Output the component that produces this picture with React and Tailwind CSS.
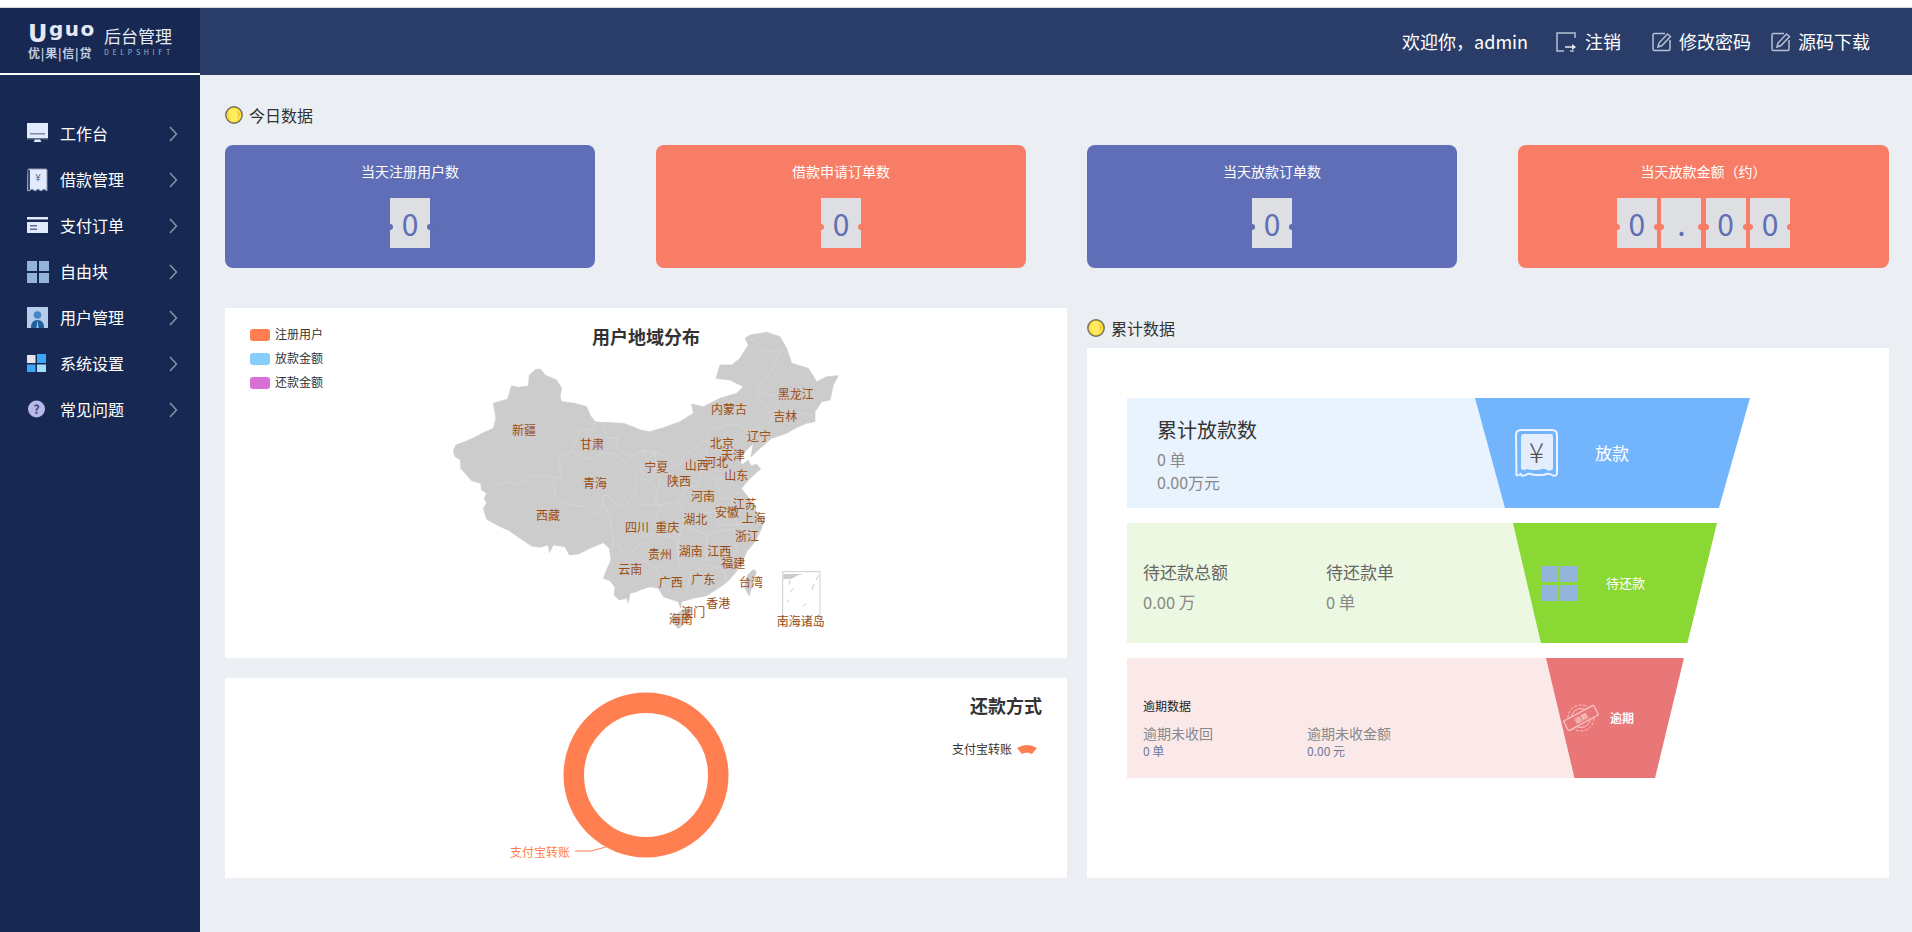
import React from 'react';

const FONT = "font-['Noto_Sans_CJK_SC','Noto_Sans',sans-serif]";

function Chevron() {
  return (
    <svg width="10" height="18" viewBox="0 0 10 18" className="ml-auto mr-[22px]" fill="none">
      <polyline points="2,2 8.5,9 2,16" stroke="#8b93a9" strokeWidth="1.5" />
    </svg>
  );
}

const NavIcons = {
  desk: (
    <svg width="22" height="22" viewBox="0 0 22 22">
      <rect x="0" y="0" width="21" height="15" fill="#e1ebfd" />
      <rect x="3" y="10" width="15" height="1.5" fill="#7d8aa6" />
      <rect x="0" y="15" width="21" height="1.5" fill="#5f6d8c" />
      <path d="M8 16.5h5l1.5 2.5h-8z" fill="#e1ebfd" />
    </svg>
  ),
  receipt: (
    <svg width="22" height="24" viewBox="0 0 22 24">
      <path d="M1 2q0-1 1-1h17q1 0 1 1v21l-3-2-3 2-3-2-3 2-3-2-3 2-2-1z" fill="#e1ebfd" stroke="#8f9ab3" />
      <path d="M2 2v20" stroke="#3c4a6c" strokeWidth="2" />
      <text x="11" y="13" fontSize="10" textAnchor="middle" fill="#5b6679">¥</text>
    </svg>
  ),
  card: (
    <svg width="22" height="18" viewBox="0 0 22 18">
      <rect x="0" y="0" width="21" height="2.5" fill="#e1ebfd" />
      <rect x="0" y="5" width="21" height="11" fill="#e1ebfd" />
      <rect x="3" y="8" width="7" height="1.5" fill="#5f6d8c" />
      <rect x="3" y="11.5" width="7" height="1.5" fill="#5f6d8c" />
    </svg>
  ),
  blocks: (
    <svg width="22" height="22" viewBox="0 0 22 22">
      <rect x="0" y="0" width="10" height="10" fill="#93b3d8" />
      <rect x="12" y="0" width="10" height="10" fill="#93b3d8" />
      <rect x="0" y="12" width="10" height="10" fill="#93b3d8" />
      <rect x="12" y="12" width="10" height="10" fill="#93b3d8" />
    </svg>
  ),
  user: (
    <svg width="22" height="22" viewBox="0 0 22 22">
      <rect width="21" height="21" fill="#b3cdea" />
      <circle cx="10.5" cy="8" r="3.8" fill="#4a86c5" />
      <path d="M4 21q0-8 6.5-8t6.5 8z" fill="#1f5f9c" />
      <path d="M10.5 13l-1 8h2z" fill="#b3cdea" />
    </svg>
  ),
  win: (
    <svg width="22" height="20" viewBox="0 0 22 20">
      <rect x="0" y="1" width="8.5" height="8" fill="#e6e6e6" />
      <rect x="10" y="0" width="9" height="9" fill="#3ea6f6" />
      <rect x="0" y="10.5" width="8.5" height="7.5" fill="#3ea6f6" />
      <rect x="10" y="10.5" width="9" height="7.5" fill="#a5e0fa" />
    </svg>
  ),
  help: (
    <svg width="22" height="20" viewBox="0 0 22 20">
      <circle cx="9.5" cy="9" r="8.5" fill="#b7b8e8" />
      <text x="9.5" y="13.5" fontSize="12" fontWeight="700" textAnchor="middle" fill="#3d4470">?</text>
    </svg>
  ),
};

const NAV = [
  ['工作台', 'desk'],
  ['借款管理', 'receipt'],
  ['支付订单', 'card'],
  ['自由块', 'blocks'],
  ['用户管理', 'user'],
  ['系统设置', 'win'],
  ['常见问题', 'help'],
];

function Sidebar() {
  return (
    <aside className="w-[200px] shrink-0 bg-[#172852] flex flex-col">
      <div className="h-[67px] border-b-2 border-white flex pl-[28px] pt-[14px] text-white">
        <div className="w-[76px] flex flex-col">
          <div className="mt-[3px] h-[21px] flex items-start text-[#e4e9f5] tracking-[1.5px] font-['DejaVu_Sans',sans-serif] font-bold">
            <span className="text-[24px] leading-[24px] -mt-[3px]">U</span>
            <span className="text-[20px] leading-[20px] -mt-[6px]">guo</span>
          </div>
          <div className="text-[12px] tracking-[0.8px] leading-[14px] font-bold whitespace-nowrap text-[#c5ccdd]">优|果|信|贷</div>
        </div>
        <div className="flex flex-col">
          <div className="text-[17px] leading-[22px] text-[#e4e9f5] whitespace-nowrap mt-[3px]">后台管理</div>
          <div className="text-[7px] leading-[8px] mt-[1px] tracking-[3.7px] text-[#aab3c9] whitespace-nowrap">DELPSHIFT</div>
        </div>
      </div>
      <nav className="mt-[36px] flex flex-col">
        {NAV.map(([label, icon]) => (
          <div key={label} className="h-[46px] flex items-center pl-[27px] text-white text-[16px]">
            <span className="w-[33px] flex items-center shrink-0">{NavIcons[icon]}</span>
            <span className="-mt-[2px]">{label}</span>
            <Chevron />
          </div>
        ))}
      </nav>
    </aside>
  );
}

function LogoutIcon() {
  return (
    <svg width="21" height="20" viewBox="0 0 21 20" fill="none" stroke="#b7bfd2" strokeWidth="1.5">
      <path d="M19 6V1H1v18h7" />
      <path d="M9 15h10" stroke="#e8ebf2" />
      <path d="M16 12l4 3-4 3z" fill="#e8ebf2" stroke="none" />
      <path d="M14 19h4" />
    </svg>
  );
}

function EditIcon() {
  return (
    <svg width="21" height="20" viewBox="0 0 21 20" fill="none" stroke="#b7bfd2" strokeWidth="1.5">
      <path d="M13 1.5H2.5q-1.5 0-1.5 1.5v14q0 1.5 1.5 1.5h14q1.5 0 1.5-1.5V8" />
      <path d="M6 15l1-4 8.5-9 3 2.5-8.5 9z" />
    </svg>
  );
}

function Header() {
  return (
    <header className="h-[67px] shrink-0 bg-[#2a3c68] flex items-center justify-end pr-[42px] text-white text-[18px]">
      <span className="whitespace-nowrap">欢迎你，admin</span>
      <span className="ml-[28px]"><LogoutIcon /></span>
      <span className="ml-[8px] whitespace-nowrap">注销</span>
      <span className="ml-[31px]"><EditIcon /></span>
      <span className="ml-[6px] whitespace-nowrap">修改密码</span>
      <span className="ml-[20px]"><EditIcon /></span>
      <span className="ml-[6px] whitespace-nowrap">源码下载</span>
    </header>
  );
}

function Coin() {
  return (
    <svg width="18" height="18" viewBox="0 0 18 18" className="shrink-0">
      <circle cx="9" cy="9" r="8.2" fill="#ffdc3a" stroke="#6f705f" strokeWidth="1.4" />
      <path d="M6 2.5q-4 6 1 13 7 0 8.5-6.5-1-5-5-6z" fill="#ffec62" />
      <path d="M11 4q3 3 1.5 9 3-3 2.5-6z" fill="#f5c431" />
    </svg>
  );
}

function SectionTitle({ children, className }) {
  return (
    <div className={`flex items-center gap-[6px] text-[16px] text-[#333] ${className}`}>
      <Coin />
      <span>{children}</span>
    </div>
  );
}

function Digit({ ch, notch }) {
  return (
    <div className="relative w-[40px] h-[50px] bg-[#dddfe3] flex items-center justify-center text-[#5f6eb6] text-[30px] leading-none">
      {ch}
      <span className={`absolute left-[-3px] top-[26px] w-[6px] h-[6px] rounded-full ${notch}`} />
      <span className={`absolute right-[-3px] top-[26px] w-[6px] h-[6px] rounded-full ${notch}`} />
    </div>
  );
}

function StatCard({ title, digits, red }) {
  const bg = red ? 'bg-[#f77d66]' : 'bg-[#5f6eb6]';
  return (
    <div className={`h-[123px] rounded-[8px] ${bg} flex flex-col items-center pt-[16px]`}>
      <div className="text-white text-[14px] leading-[20px]">{title}</div>
      <div className="mt-[17px] flex gap-[4.4px]">
        {digits.map((d, i) => <Digit key={i} ch={d} notch={bg} />)}
      </div>
    </div>
  );
}

/* Map traces: west half in one crop's coordinates, east half in another's. */
const W = ([x, y]) => `${x + 30},${y + 150}`;
const E = ([x, y]) => `${x + 600},${y + 45}`;

const WEST = [[455,187],[435,185],[420,165],[410,140],[375,130],[335,125],[330,110],[335,85],[320,60],[285,45],[272,28],[258,28],[238,45],[235,78],[205,82],[185,77],[172,118],[155,122],[130,130],[138,175],[130,205],[100,218],[68,235],[45,245],[18,255],[10,272],[15,290],[32,300],[32,325],[50,345],[65,362],[92,370],[95,390],[110,400],[103,415],[110,430],[100,445],[110,478],[150,500],[175,510],[200,528],[225,545],[245,558],[270,562],[295,555],[298,578],[310,555],[345,560],[358,585],[385,582],[420,565],[460,548],[478,565],[483,600],[470,630],[460,655],[480,662],[495,682],[492,705],[508,720],[530,715],[535,728],[540,700],[560,695]];
const EAST = [[0,795],[30,785],[55,790],[70,815],[100,825],[115,830],[122,850],[125,830],[160,820],[200,812],[235,790],[262,770],[285,745],[305,715],[320,680],[345,650],[365,610],[370,590],[350,560],[335,530],[315,505],[305,490],[325,465],[362,432],[350,418],[333,422],[325,405],[305,420],[300,400],[320,375],[340,355],[333,395],[360,370],[395,340],[440,325],[465,310],[500,295],[525,290],[525,260],[545,230],[570,225],[580,180],[595,152],[560,155],[530,170],[505,130],[455,115],[440,70],[420,35],[380,22],[330,30],[315,40],[325,60],[300,100],[275,120],[240,120],[228,160],[270,165],[310,185],[290,205],[240,220],[190,245],[155,237],[160,265],[120,290],[70,308],[30,320],[0,315]];
const NORTH = [[560,205],[520,190]];
const OUTLINE = [...WEST.map(W), ...EAST.map(E), ...NORTH.map(W)].join(' ');
const HAINAN = [[90,880],[135,850],[155,872],[130,900],[115,912],[95,892]].map(E).join(' ');
const TAIWAN = [[340,732],[350,740],[335,790],[328,815],[312,785],[322,750]].map(E).join(' ');

const WB = [
  [[125,380],[150,372],[180,365],[200,373],[245,350],[280,345],[310,355],[335,350],[325,295],[365,275],[390,215],[430,205],[435,187]],
  [[310,355],[315,410],[345,432],[405,440],[430,465],[455,445],[458,410],[470,405],[495,430],[525,440],[555,400],[560,340],[520,300],[490,280],[455,278],[430,298],[395,290],[365,275]],
  [[455,187],[470,235],[505,232],[500,260],[540,290],[580,270],[600,310]],
  [[458,430],[480,470],[490,555],[483,570]],
  [[490,530],[530,595],[575,545],[600,560]],
].map((l) => l.map(W).join(' '));

const EB = [
  [[315,40],[345,45],[365,75],[420,80],[400,130],[365,175],[350,210]],
  [[365,205],[420,215],[395,280],[440,255],[520,270]],
  [[350,210],[385,260],[400,285],[360,310],[320,320]],
  [[320,320],[300,300],[260,300],[205,320],[200,345],[135,390],[115,430],[60,385],[45,380]],
  [[205,345],[190,430],[175,480],[135,490]],
  [[190,430],[225,455],[255,465],[305,490]],
  [[135,490],[115,530],[135,570],[225,560],[245,520],[225,455]],
  [[245,520],[275,520],[305,490]],
  [[275,520],[290,600],[370,590]],
  [[225,560],[235,600],[290,600]],
  [[115,530],[60,540],[45,600],[60,620],[120,630],[135,570]],
  [[120,630],[115,660],[115,730]],
  [[200,630],[135,600]],
  [[200,630],[200,720],[150,745],[140,800]],
  [[200,630],[280,610],[290,680],[250,730],[200,720]],
  [[250,730],[262,770]],
  [[0,640],[45,625],[110,640],[115,700],[50,730],[0,700]],
  [[50,730],[70,780],[115,825]],
  [[115,730],[140,745]],
  [[45,380],[30,400],[60,460],[45,540]],
  [[0,380],[40,380],[50,420],[30,470],[10,460],[0,420]],
  [[0,540],[60,540]],
].map((l) => l.map(E).join(' '));

const LABELS = [
  ['新疆', 252, 358], ['甘肃', 456, 401], ['青海', 465, 517], ['西藏', 324, 614], ['内蒙古', 867, 296],
  ['黑龙江', 1067, 250], ['吉林', 1036, 315], ['辽宁', 957, 377], ['北京', 846, 398], ['天津', 879, 433],
  ['河北', 828, 455], ['山西', 770, 463], ['宁夏', 649, 469], ['陕西', 717, 511], ['山东', 889, 494],
  ['河南', 789, 557], ['江苏', 914, 580], ['安徽', 861, 605], ['上海', 941, 623], ['湖北', 766, 626],
  ['四川', 591, 650], ['重庆', 682, 650], ['浙江', 921, 677], ['贵州', 660, 730], ['湖南', 752, 722],
  ['江西', 838, 722], ['福建', 880, 758], ['云南', 571, 776], ['广西', 692, 814], ['广东', 790, 806],
  ['台湾', 933, 815], ['香港', 835, 878], ['澳门', 760, 904], ['海南', 722, 926], ['南海诸岛', 1082, 930],
];

function ChinaMap() {
  return (
    <svg width="420" height="330" viewBox="0 0 1260 990" className="absolute left-[215px] top-[2px]">
      <polygon points={OUTLINE} fill="#cccccc" stroke="#cccccc" strokeWidth="2" strokeLinejoin="round" />
      <polygon points={HAINAN} fill="#cccccc" />
      <polygon points={TAIWAN} fill="#cccccc" />
      {[...WB, ...EB].map((p, i) => (
        <polyline key={i} points={p} fill="none" stroke="#dadada" strokeWidth="2" />
      ))}
      <rect x="1028" y="785" width="112" height="163" fill="#fff" stroke="#cfcfcf" strokeWidth="3" />
      <path d="M1030 792h60q-20 4-35 14l-25 2z" fill="#cccccc" />
      <path d="M1050 810l-2 14M1135 795l-6 15M1122 822l-6 18M1060 835l-10 12M1100 880l-12 10M1048 870l-8 8" stroke="#cccccc" strokeWidth="3" fill="none" />
      {LABELS.map(([t, x, y]) => (
        <text key={t} x={x} y={y} fontSize="36" fill="#9c4c12" textAnchor="middle" dominantBaseline="central">{t}</text>
      ))}
    </svg>
  );
}

function MapPanel() {
  const legend = [['注册用户', 'bg-[#ff7f50]'], ['放款金额', 'bg-[#87cefa]'], ['还款金额', 'bg-[#da70d6]']];
  return (
    <div className="relative h-[350px] bg-white">
      <div className="absolute left-[25px] top-[18px] flex flex-col gap-[6px]">
        {legend.map(([t, c]) => (
          <div key={t} className="h-[18px] flex items-center gap-[5px] text-[12px] text-[#333]">
            <span className={`w-[20px] h-[12px] rounded-[3px] ${c}`} />
            <span className="-mt-[2px]">{t}</span>
          </div>
        ))}
      </div>
      <ChinaMap />
      <div className="relative text-center text-[18px] font-bold text-[#333] leading-[24px] pt-[16px]">用户地域分布</div>
    </div>
  );
}

function RingPanel() {
  return (
    <div className="relative h-[200px] bg-white">
      <svg width="300" height="180" viewBox="0 0 300 180" className="absolute left-[280px] top-[10px]">
        <circle cx="141" cy="87" r="72.25" fill="none" stroke="#ff7f50" strokeWidth="20.5" />
        <polyline points="70,163 86,163 101,159" fill="none" stroke="#ff7f50" strokeWidth="1" />
        <text x="5" y="163" fontSize="12" fill="#ff7f50" dominantBaseline="central">支付宝转账</text>
      </svg>
      <div className="flex flex-col items-end pr-[25px] pt-[15px]">
        <div className="text-[18px] font-bold text-[#333] leading-[25px]">还款方式</div>
        <div className="mt-[22px] mr-[5px] flex items-center gap-[5px] text-[12px] text-[#333] leading-[18px]">
          <span>支付宝转账</span>
          <svg width="20" height="10" viewBox="0 0 20 10">
            <path d="M0 4Q10-2 20 4L15 10Q10 7 5 10Z" fill="#ff7f50" />
          </svg>
        </div>
      </div>
    </div>
  );
}

function ReceiptBig() {
  return (
    <svg width="43" height="48" viewBox="0 0 43 48" className="shrink-0">
      <path d="M1 6q0-5 5-5h31q5 0 5 5v39q-2 3-5 1t-5.5-1-5 1-5.500 0-5-1-5.500 1-5-1q-3 2-4 1z" fill="#73b5fd" stroke="#eaf3ff" strokeWidth="2" />
      <path d="M6 8q0-3 3-3h27q2 0 2 3v32q-3 3-6 1t-5-1-5 1-5 0-5-1q-3 2-6 0z" fill="#e3edfd" />
      <text x="21.5" y="22" fontSize="28" fontWeight="300" textAnchor="middle" dominantBaseline="central" fill="#555">¥</text>
    </svg>
  );
}

function GridIcon() {
  return (
    <svg width="36" height="35" viewBox="0 0 36 35" className="shrink-0">
      <rect x="0" y="0" width="16.5" height="16" fill="#93b3d8" />
      <rect x="19" y="0" width="17" height="16" fill="#93b3d8" />
      <rect x="0" y="19" width="16.5" height="16" fill="#93b3d8" />
      <rect x="19" y="19" width="17" height="16" fill="#93b3d8" />
    </svg>
  );
}

function StampIcon() {
  return (
    <svg width="36" height="28" viewBox="0 0 36 28" className="shrink-0" fill="none" stroke="#f7c6c6" strokeWidth="1">
      <circle cx="18" cy="14" r="13" strokeDasharray="3 1.5" />
      <circle cx="18" cy="14" r="9.5" />
      <g transform="rotate(-28 18 14)">
        <rect x="1" y="8.5" width="34" height="11" rx="1" fill="#e97777" strokeWidth="1.2" />
        <text x="18" y="14" fontSize="7" textAnchor="middle" dominantBaseline="central" fill="#f7c6c6" stroke="none">逾期</text>
      </g>
    </svg>
  );
}

function Funnel() {
  return (
    <div className="flex flex-col gap-[15px] pt-[50px] pl-[40px]">
      <div className="flex h-[110px]">
        <div className="w-[378px] bg-[#e8f3fe] pl-[30px] pt-[18px]">
          <div className="text-[20px] leading-[28px] text-[#333]">累计放款数</div>
          <div className="mt-[4px] text-[16px] leading-[23px] text-[#888]">0 单</div>
          <div className="text-[16px] leading-[23px] text-[#888]">0.00万元</div>
        </div>
        <div className="relative w-[275px] -ml-[30px] bg-[#73b5fd] [clip-path:polygon(0_0,100%_0,88.7%_100%,10.9%_100%)] flex items-center pl-[40px] gap-[37px] text-white text-[17px]">
          <ReceiptBig />
          <span>放款</span>
        </div>
      </div>
      <div className="flex h-[120px]">
        <div className="w-[414px] bg-[#ecf8e1] pl-[16px] pt-[37px] flex">
          <div className="w-[183px]">
            <div className="text-[17px] leading-[24px] text-[#666]">待还款总额</div>
            <div className="mt-[6px] text-[16.5px] leading-[24px] text-[#888]">0.00 万</div>
          </div>
          <div>
            <div className="text-[17px] leading-[24px] text-[#666]">待还款单</div>
            <div className="mt-[6px] text-[16.5px] leading-[24px] text-[#888]">0 单</div>
          </div>
        </div>
        <div className="relative w-[204px] -ml-[28px] bg-[#8ad833] [clip-path:polygon(0_0,100%_0,85.5%_100%,13.7%_100%)] flex items-center pl-[28px] gap-[29px] text-white text-[13px]">
          <GridIcon />
          <span>待还款</span>
        </div>
      </div>
      <div className="flex h-[120px]">
        <div className="w-[447.5px] bg-[#fbe9e9] pl-[16px] pt-[40px]">
          <div className="text-[12px] leading-[16px] text-[#222]">逾期数据</div>
          <div className="mt-[9px] flex">
            <div className="w-[164px]">
              <div className="text-[14px] leading-[20px] text-[#888]">逾期未收回</div>
              <div className="text-[12px] leading-[16px] text-[#6b7a99]">0 单</div>
            </div>
            <div>
              <div className="text-[14px] leading-[20px] text-[#888]">逾期未收金额</div>
              <div className="text-[12px] leading-[16px] text-[#6b7a99]">0.00 元</div>
            </div>
          </div>
        </div>
        <div className="relative w-[138px] -ml-[28.5px] bg-[#e97777] [clip-path:polygon(0_0,100%_0,79%_100%,20.65%_100%)] flex items-center pl-[17px] gap-[11px] text-white text-[12px] font-bold">
          <StampIcon />
          <span>逾期</span>
        </div>
      </div>
    </div>
  );
}

export default function App() {
  return (
    <div className={`h-screen overflow-hidden flex flex-col bg-white ${FONT}`}>
      <div className="h-[8px] shrink-0 bg-white border-b border-[#d3d6dc]" />
      <div className="flex-1 flex min-h-0">
        <Sidebar />
        <div className="flex-1 min-w-0 flex flex-col bg-[#ebeef3]">
          <Header />
          <main className="flex-1 pl-[25px] pr-[23px]">
            <SectionTitle className="mt-[28px] h-[24px]">今日数据</SectionTitle>
            <div className="mt-[18px] grid grid-cols-[370px_370px_370px_371px] gap-x-[61px]">
              <StatCard title="当天注册用户数" digits={['0']} />
              <StatCard title="借款申请订单数" digits={['0']} red />
              <StatCard title="当天放款订单数" digits={['0']} />
              <StatCard title="当天放款金额（约）" digits={['0', '.', '0', '0']} red />
            </div>
            <div className="mt-[40px] grid grid-cols-[842px_802px] gap-x-[20px]">
              <div className="flex flex-col gap-[20px]">
                <MapPanel />
                <RingPanel />
              </div>
              <div className="flex flex-col">
                <SectionTitle className="h-[40px]">累计数据</SectionTitle>
                <div className="h-[530px] bg-white">
                  <Funnel />
                </div>
              </div>
            </div>
          </main>
        </div>
      </div>
    </div>
  );
}
